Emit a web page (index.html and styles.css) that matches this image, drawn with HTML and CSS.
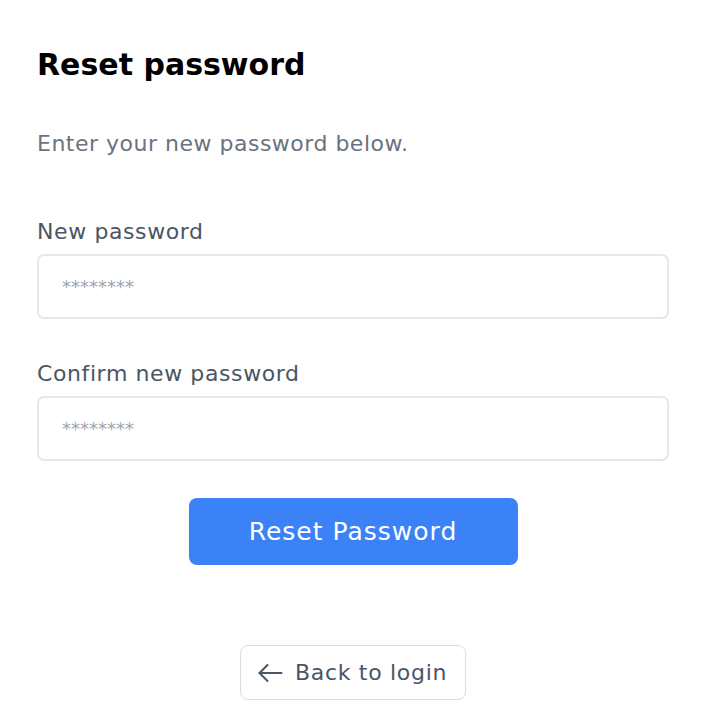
FILE: index.html
```html
<!DOCTYPE html>
<html lang="en">
<head>
<meta charset="utf-8">
<title>Reset password</title>
<link rel="stylesheet" href="styles.css">
</head>
<body>
<main class="page">
  <h1 class="title">Reset password</h1>
  <p class="subtitle">Enter your new password below.</p>
  <form class="form">
    <label class="field">
      <span class="label">New password</span>
      <input class="input" type="password" placeholder="********">
    </label>
    <label class="field field-second">
      <span class="label">Confirm new password</span>
      <input class="input" type="password" placeholder="********">
    </label>
    <div class="actions">
      <button class="primary" type="button">Reset Password</button>
    </div>
  </form>
  <div class="back-row">
    <a class="back" href="#">
      <svg class="back-icon" width="25" height="20" viewBox="0 0 25 20" fill="none" stroke="#4a5568" stroke-width="2" stroke-linecap="round" stroke-linejoin="round"><path d="M23.5 10H1.5"/><path d="M9.5 2L1.5 10L9.5 18"/></svg>
      <span class="back-text">Back to login</span>
    </a>
  </div>
</main>
</body>
</html>
```
FILE: styles.css
```css
* { box-sizing: border-box; }
html, body { margin: 0; padding: 0; background: #ffffff; }
body { font-family: "DejaVu Sans", "Liberation Sans", sans-serif; }
.page { padding: 47px 41px 0 37px; display: flex; flex-direction: column; }
.title { margin: 0; font-size: 30px; line-height: 36px; font-weight: 700; color: #000; }
.subtitle { margin: 47px 0 0; font-size: 22px; line-height: 28px; color: #6b7280; font-weight: 400; letter-spacing: 0.5px; }
.form { margin-top: 60px; display: flex; flex-direction: column; }
.field { display: flex; flex-direction: column; gap: 8px; }
.field-second { margin-top: 41px; }
.label { font-size: 22px; line-height: 28px; color: #4b5563; letter-spacing: 0.6px; }
.input { height: 65px; border: 2px solid #e5e7eb; border-radius: 7px; padding: 0 0 0 23px; font-family: inherit; font-size: 18px; color: #374151; outline: none; background: #fff; }
.input::placeholder { color: #9ca3af; }
.actions { display: flex; justify-content: center; margin-top: 37px; }
.primary { width: 329px; height: 67px; background: #3b82f6; color: #fff; border: none; border-radius: 8px; font-family: inherit; font-size: 25px; letter-spacing: 1px; cursor: pointer; }
.back-row { display: flex; justify-content: center; margin-top: 80px; }
.back { display: flex; align-items: center; gap: 12px; height: 55px; padding: 0 18px 0 17px; border: 1px solid #dddddd; border-radius: 8px; color: #4a5568; text-decoration: none; font-size: 22px; letter-spacing: 0.7px; }
.back-icon { display: block; }
```
